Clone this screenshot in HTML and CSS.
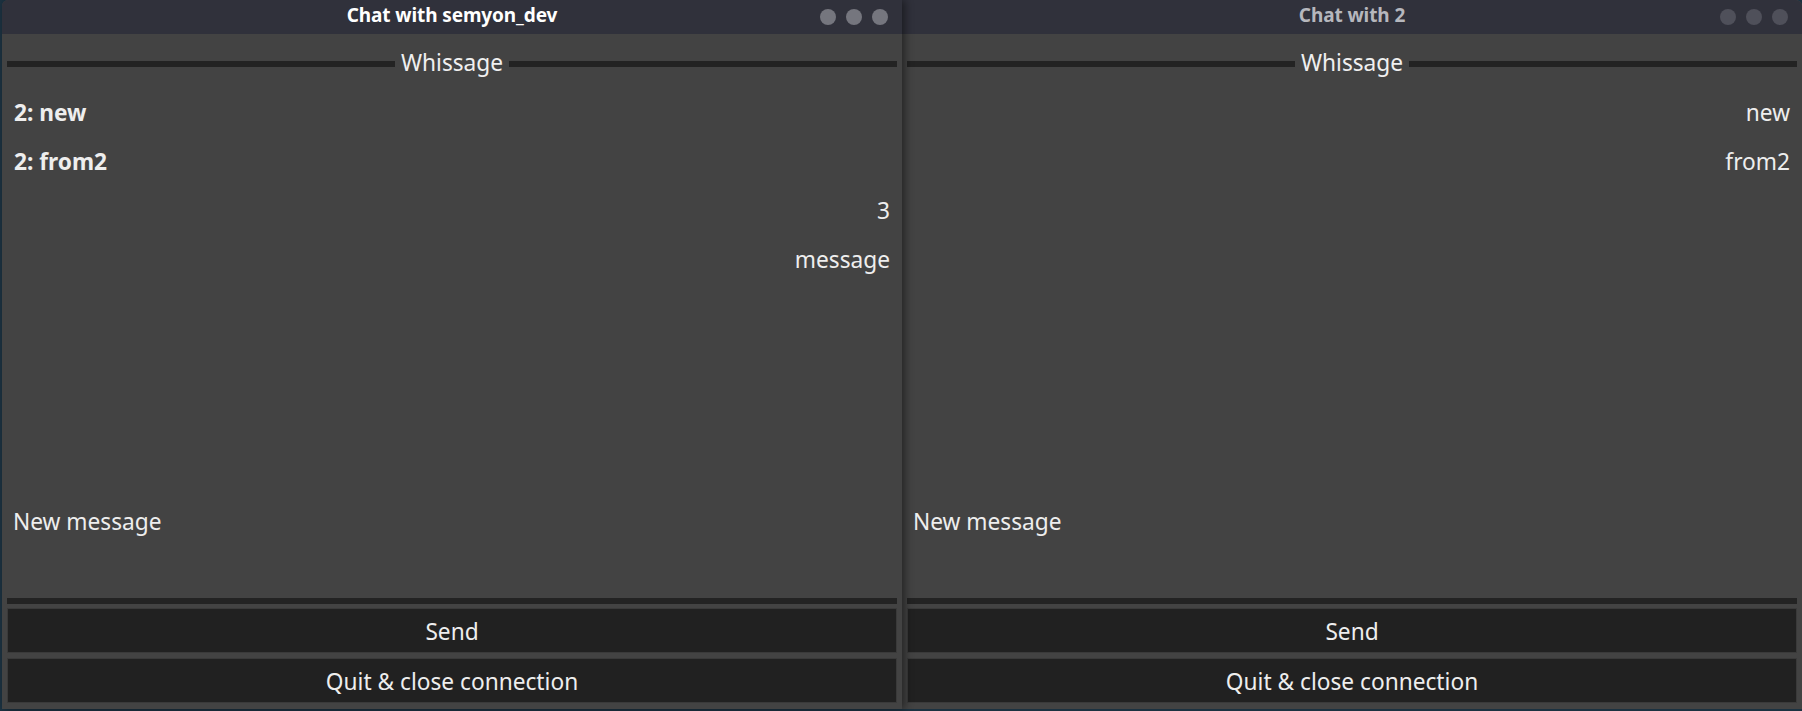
FILE: index.html
```html
<!DOCTYPE html>
<html lang="en">
<head>
<meta charset="utf-8">
<title>Whissage</title>
<link rel="stylesheet" href="styles.css">
</head>
<body>
<div class="desktop">
  <section class="window active">
    <header class="titlebar">
      <span></span>
      <span class="title">Chat with semyon_dev</span>
      <div class="controls"><span class="dot"></span><span class="dot"></span><span class="dot"></span></div>
    </header>
    <div class="content">
      <div class="legend"><span class="rule"></span><span class="legend-text">Whissage</span><span class="rule"></span></div>
      <div class="messages">
        <div class="msg incoming">2: new</div>
        <div class="msg incoming">2: from2</div>
        <div class="msg outgoing">3</div>
        <div class="msg outgoing">message</div>
      </div>
      <div class="compose">New message</div>
      <div class="rule bottom-rule"></div>
      <button class="btn">Send</button>
      <button class="btn">Quit &amp; close connection</button>
    </div>
  </section>
  <section class="window inactive">
    <header class="titlebar">
      <span></span>
      <span class="title">Chat with 2</span>
      <div class="controls"><span class="dot"></span><span class="dot"></span><span class="dot"></span></div>
    </header>
    <div class="content">
      <div class="legend"><span class="rule"></span><span class="legend-text">Whissage</span><span class="rule"></span></div>
      <div class="messages">
        <div class="msg outgoing">new</div>
        <div class="msg outgoing">from2</div>
      </div>
      <div class="compose">New message</div>
      <div class="rule bottom-rule"></div>
      <button class="btn">Send</button>
      <button class="btn">Quit &amp; close connection</button>
    </div>
  </section>
</div>
</body>
</html>
```

FILE: styles.css
```css
html, body {
  margin: 0;
  padding: 0;
  background: #1c3241;
  width: 1802px;
  height: 711px;
  overflow: hidden;
}

.desktop {
  display: flex;
  padding-left: 2px;
  height: 709px;
  font-family: "Noto Sans", "Open Sans", sans-serif;
  color: #eeeeee;
}

.window {
  width: 900px;
  height: 709px;
  display: flex;
  flex-direction: column;
  background: #434343;
  position: relative;
}

.window.active {
  z-index: 2;
  border-top-left-radius: 6px;
  box-shadow: 3px 0 8px rgba(0, 0, 0, 0.45);
}

.window.inactive {
  z-index: 1;
  border-top-right-radius: 6px;
  overflow: hidden;
}

.titlebar {
  height: 34px;
  flex: none;
  background: #30313b;
  display: grid;
  grid-template-columns: 1fr auto 1fr;
  align-items: center;
  border-top-left-radius: inherit;
  border-top-right-radius: inherit;
}

.title {
  align-self: start;
  font-weight: 700;
  font-size: 19px;
  line-height: 30px;
  color: #ffffff;
  letter-spacing: -0.1px;
}

.inactive .title {
  color: #b6b7bd;
}

.controls {
  justify-self: end;
  display: flex;
  gap: 10px;
  padding-right: 14px;
  margin-top: -1px;
}

.dot {
  width: 16px;
  height: 16px;
  border-radius: 50%;
  background: #75767e;
}

.inactive .dot {
  background: #4f505a;
}

.content {
  flex: 1;
  display: flex;
  flex-direction: column;
  padding: 0 5px 6px;
  min-height: 0;
}

.legend {
  margin-top: 16px;
  height: 28px;
  display: flex;
  align-items: center;
  font-size: 22.7px;
  line-height: 28px;
}

.rule {
  display: block;
  height: 6px;
  background: #232323;
  flex: 1;
}

.legend-text {
  padding: 0 6px;
  margin-bottom: 3px;
  color: #f0f0f0;
}

.messages {
  flex: 1;
  padding-top: 10px;
  display: flex;
  flex-direction: column;
  min-height: 0;
}

.msg {
  font-size: 22.7px;
  line-height: 49px;
  padding: 0 7px 0 7px;
}

.msg.incoming {
  font-weight: 700;
  text-align: left;
}

.msg.outgoing {
  text-align: right;
}

.compose {
  height: 100px;
  flex: none;
  font-size: 22.7px;
  line-height: 48px;
  padding: 0 6px;
}

.bottom-rule {
  flex: none;
  margin-bottom: 4px;
}

.btn {
  height: 45px;
  flex: none;
  margin: 0;
  padding: 3px 0 0;
  background: #212121;
  border: 1px solid #3a3a3a;
  box-shadow: inset 0 0 1px #2a2a2a;
  color: #eeeeee;
  font-family: "Noto Sans", "Open Sans", sans-serif;
  font-size: 22.7px;
  line-height: 40px;
  text-align: center;
}

.btn + .btn {
  margin-top: 5px;
}
```
